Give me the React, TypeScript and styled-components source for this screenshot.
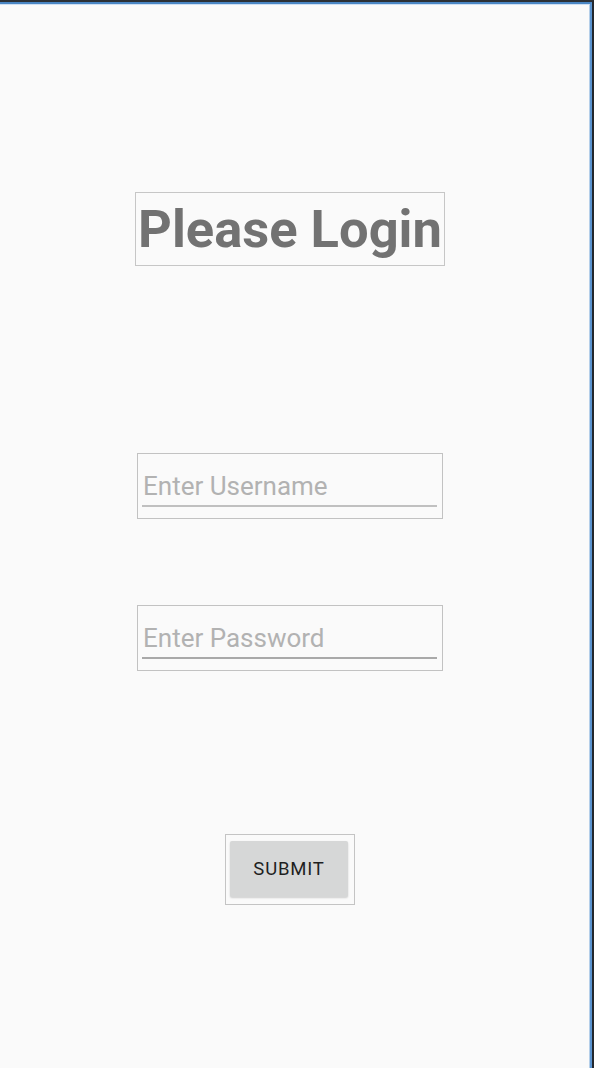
import React from 'react';
import styled, { createGlobalStyle } from 'styled-components';

const GlobalStyle = createGlobalStyle`
  html, body {
    margin: 0;
    padding: 0;
    background: #fafafa;
  }

  body {
    font-family: Roboto, 'Noto Sans', sans-serif;
  }
`;

export default function App() {
  return (
    <>
      <GlobalStyle />
      <OuterFrame>
        <WindowFrame>
          <Screen>
            <TitleBox>
              <Title>Please Login</Title>
            </TitleBox>

            <FieldBox>
              <Field type="text" placeholder="Enter Username" />
            </FieldBox>

            <FieldBox $spaced>
              <Field type="password" placeholder="Enter Password" $dark />
            </FieldBox>

            <ButtonBox>
              <SubmitButton type="button">SUBMIT</SubmitButton>
            </ButtonBox>
          </Screen>
        </WindowFrame>
      </OuterFrame>
    </>
  );
}

const OuterFrame = styled.div`
  width: 594px;
  height: 1068px;
  box-sizing: border-box;
  border-top: 2px solid #2c3036;
  border-right: 2px solid #23272d;
  background: #fafafa;
`;

const WindowFrame = styled.div`
  height: 100%;
  box-sizing: border-box;
  border-top: 2px solid #4a86c4;
  border-right: 2px solid #5a93cf;
`;

const Screen = styled.div`
  height: 100%;
  box-sizing: border-box;
  border-top: 1px solid #cfdff2;
  border-right: 1px solid #b5cfe9;
  background: #fafafa;
  display: flex;
  flex-direction: column;
  align-items: center;
  padding: 187px 9px 0 0;
`;

const TitleBox = styled.div`
  box-sizing: border-box;
  width: 310px;
  height: 74px;
  border: 1px solid #c6c6c6;
  display: flex;
  align-items: center;
  justify-content: center;
`;

const Title = styled.h1`
  margin: 0;
  font-family: Roboto, sans-serif;
  font-weight: 700;
  font-size: 52.5px;
  line-height: 60px;
  color: #727272;
  white-space: nowrap;
`;

const FieldBox = styled.div<{ $spaced?: boolean }>`
  box-sizing: border-box;
  width: 306px;
  height: 66px;
  margin-top: ${({ $spaced }) => ($spaced ? '86px' : '187px')};
  border: 1px solid #c2c2c2;
  display: flex;
  align-items: flex-end;
  padding: 0 5px 11px 4px;
`;

const Field = styled.input<{ $dark?: boolean }>`
  box-sizing: border-box;
  width: 100%;
  height: 35px;
  border: none;
  border-bottom: 2px solid ${({ $dark }) => ($dark ? '#a9a9a9' : '#c0c0c0')};
  background: transparent;
  outline: none;
  padding: 0 0 6px 1px;
  font-family: Roboto, sans-serif;
  font-size: 26px;
  line-height: 28px;
  color: #555;

  &::placeholder {
    color: #b2b2b2;
    opacity: 1;
  }
`;

const ButtonBox = styled.div`
  box-sizing: border-box;
  width: 130px;
  height: 71px;
  margin-top: 163px;
  border: 1px solid #c4c4c4;
  padding: 6px 6px 7px 4px;
  display: flex;
`;

const SubmitButton = styled.button`
  flex: 1;
  border: none;
  border-radius: 2px;
  background: #d6d7d7;
  box-shadow: 0 1px 2px rgba(0, 0, 0, 0.18);
  font-family: Roboto, sans-serif;
  font-weight: 400;
  font-size: 18.5px;
  letter-spacing: 0.8px;
  color: #1f1f1f;
  cursor: pointer;
  padding: 0;
`;
